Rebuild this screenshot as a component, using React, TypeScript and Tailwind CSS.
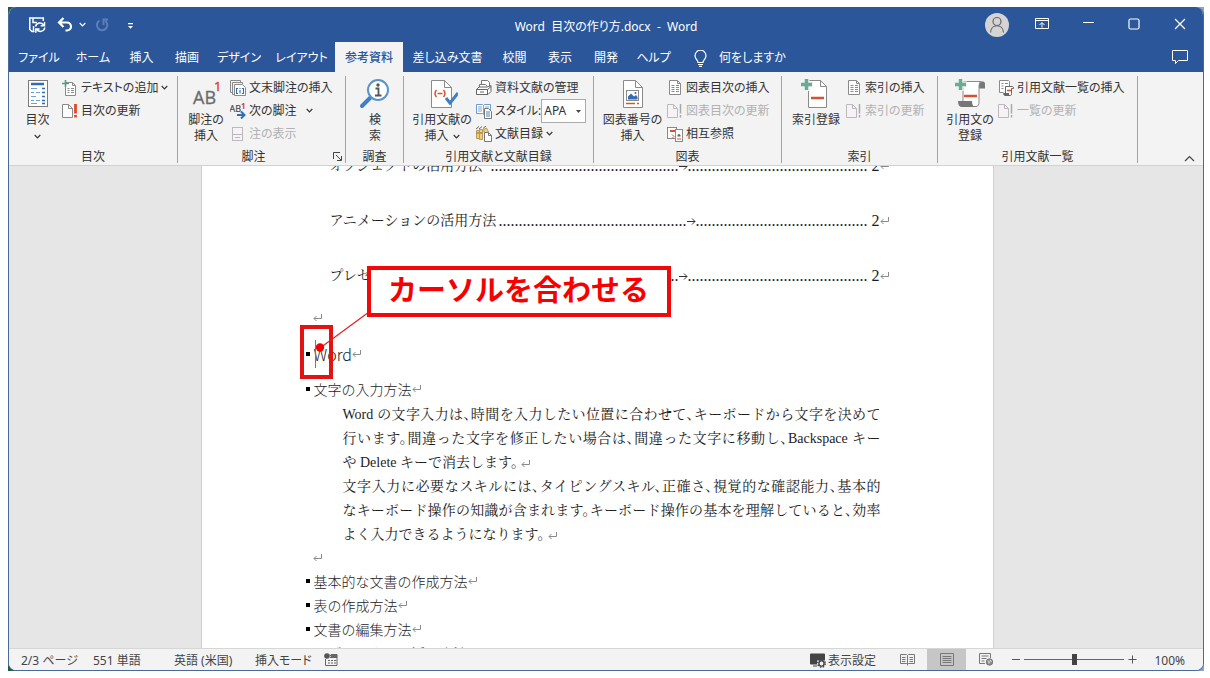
import type { ReactNode } from "react";

function Chevron({ color = "#333" }: { color?: string }) {
  return (
    <svg width="7" height="5" viewBox="0 0 7 5" fill="none" stroke={color} strokeWidth="1.2" aria-hidden="true">
      <path d="M.7 1 3.5 3.8 6.3 1" />
    </svg>
  );
}

/* ---------- large ribbon icons ---------- */

function L({ children }: { children: ReactNode }) {
  return (
    <svg width="32" height="32" viewBox="0 0 32 32" fill="none" className="shrink-0" aria-hidden="true">
      {children}
    </svg>
  );
}

const TocIcon = () => (
  <L>
    <rect x="6.5" y="2.5" width="19" height="26" fill="#fff" stroke="#7b7b7b" />
    <path d="M9 6h13" stroke="#2f6db5" strokeWidth="2.4" />
    <path d="M9 10.500h6M9 14.5h3M14 14.5h4M9 18.5h5M9 22.5h3M14 22.5h4M9 25.5h6" stroke="#6fa0d4" />
    <path d="M20 10.500h3M20 14.5h3M20 18.5h3M20 22.5h3M20 25.500h3" stroke="#2f6db5" strokeWidth="1.300" />
  </L>
);

const FootnoteIcon = () => (
  <L>
    <text x="3" y="26" fontSize="18" fill="#6b6b6b" stroke="#6b6b6b" strokeWidth=".3" fontFamily="Open Sans, sans-serif">
      AB
    </text>
    <text x="24" y="13" fontSize="13" fill="#d9442c" stroke="#d9442c" strokeWidth=".4" fontFamily="Open Sans, sans-serif">
      1
    </text>
  </L>
);

const SearchInfoIcon = () => (
  <L>
    <path d="M12 19 3 28" stroke="#3f7fc4" strokeWidth="4" strokeLinecap="round" />
    <circle cx="19" cy="12" r="10" fill="#fff" stroke="#5b93cf" strokeWidth="2" />
    <circle cx="19" cy="7" r="1.7" fill="#555" />
    <path d="M16.5 10.5h3V17M16 17.5h6.500" stroke="#555" strokeWidth="1.8" />
  </L>
);

const CitationIcon = () => (
  <L>
    <path d="M5.5 2.500h13l7 7v20h-20z" fill="#fff" stroke="#8a8a8a" />
    <path d="M18.5 2.500v7h7" stroke="#8a8a8a" />
    <path d="M10.500 12q-3 3.500 0 7M17.500 12q3 3.500 0 7M11.500 15.500h5" stroke="#d9532c" strokeWidth="1.5" />
    <path d="m20 20 4 5 8-10" stroke="#3f7fc4" strokeWidth="3" />
  </L>
);

const CaptionIcon = () => (
  <L>
    <path d="M6.5 2.500h12l7 7v20h-19z" fill="#fff" stroke="#8a8a8a" />
    <path d="M18.5 2.500v7h7" stroke="#8a8a8a" />
    <rect x="9.5" y="12.500" width="12" height="10" fill="#fff" stroke="#8a8a8a" />
    <path d="M11 21.500v-3l3-3 3 3 2-1.500 1.500 2v2.500z" fill="#2f6db5" />
    <circle cx="18.5" cy="15" r="1" fill="#2f6db5" />
    <path d="M9 25.500h9M20 25.500h2" stroke="#d9532c" strokeWidth="1.5" />
  </L>
);

const MarkEntryIcon = () => (
  <L>
    <path d="M8.500 2.500h12l6 6v21h-18z" fill="#fff" stroke="#8a8a8a" />
    <path d="M20.500 2.500v6h6" stroke="#8a8a8a" />
    <path d="M6.500 0v13M0 6.500h13" stroke="#f3f3f3" strokeWidth="6" />
    <path d="M6.500 1v11M1 6.500h11" stroke="#6aab93" strokeWidth="3.5" />
    <path d="M11 20h13" stroke="#d35230" strokeWidth="2.5" />
  </L>
);

const MarkCitationIcon = () => (
  <L>
    <path d="M24 3.500h5q2 0 2 3v4h-6z" fill="#777" />
    <path d="M9 3.500h18q-2 1-2 4v16q0 5-3 5H9z" fill="#fff" stroke="#8a8a8a" />
    <path d="M4 23h14q0 6 4 6H8q-4 0-4-6z" fill="#777" />
    <path d="M6.500 0v13M0 6.500h13" stroke="#f3f3f3" strokeWidth="6" />
    <path d="M6.500 1v11M1 6.500h11" stroke="#6aab93" strokeWidth="3.5" />
    <path d="M10 18h13" stroke="#d35230" strokeWidth="2.5" />
  </L>
);

/* ---------- small ribbon icons ---------- */

function S({ children }: { children: ReactNode }) {
  return (
    <svg width="16" height="16" viewBox="0 0 16 16" fill="none" className="shrink-0" aria-hidden="true">
      {children}
    </svg>
  );
}

const AddTextIcon = () => (
  <S>
    <path d="M3.500 2.500h7l3 3v10h-10z" fill="#fff" stroke="#8a8a8a" />
    <path d="M10.500 2.500v3h3M5.500 8.500h2M9 8.500h3M5.500 10.500h2M9 10.500h3M5.500 12.500h2M9 12.500h3" stroke="#8a8a8a" />
    <path d="M3.500 0v7M0 3.500h7" stroke="#4f9e80" strokeWidth="1.6" />
  </S>
);

const UpdateIcon = ({ off = false }: { off?: boolean }) => (
  <S>
    <path d="M.5 1.500h6l4 4v9H.5z" fill={off ? "#f6f3f6" : "#fff"} stroke={off ? "#bdb8bd" : "#8a8a8a"} />
    <path d="M6.500 1.500v4h4" stroke={off ? "#bdb8bd" : "#8a8a8a"} />
    <path d="M13.500 1v9.500M13.500 12v2.500" stroke={off ? "#a9a9a9" : "#e0492a"} strokeWidth={off ? "1.5" : "2.8"} />
  </S>
);

const EndnoteIcon = () => (
  <S>
    <path d="M2.500 12.500h-2v-12h10v2M4.500 14.500h-2v-12h10v2" stroke="#8a8a8a" />
    <path d="M4.500 4.500h8l3 3v8h-11z" fill="#fff" stroke="#8a8a8a" />
    <path d="M8 8.500H6.500v5H8M12 8.500h1.500v5H12M10 8v1M10 10v3.500" stroke="#2f6db5" strokeWidth="1.1" />
  </S>
);

const NextNoteIcon = () => (
  <S>
    <text x="-.5" y="9" fontSize="9" fill="#444" stroke="#444" strokeWidth=".2" fontFamily="Open Sans, sans-serif">
      AB
    </text>
    <text x="11" y="6" fontSize="8" fontWeight="700" fill="#d9442c" fontFamily="Open Sans, sans-serif">
      1
    </text>
    <path d="M7 12h7M11 8.500l3.500 3.500-3.500 3.500" stroke="#2f6db5" strokeWidth="2" />
  </S>
);

const ShowNotesIcon = () => (
  <S>
    <rect x="2.500" y="1.500" width="10" height="13" fill="#f6f3f6" stroke="#bdb8bd" />
    <path d="M2.500 8.500h10M5 11.500h5" stroke="#bdb8bd" />
  </S>
);

const SourcesIcon = () => (
  <S>
    <path d="M5.500 5V.5h6l2 2V8" fill="#fff" stroke="#777" />
    <path d="M3.500 8V4.500h6l2 2" stroke="#777" fill="#fff" />
    <path d="M.5 9.500 3 7h8l4-1.500v6L12 14.500H.5z" fill="#fff" stroke="#666" />
    <path d="M.5 9.500h11v5M11.500 9.500l3.500-3M4 12h4" stroke="#666" />
  </S>
);

const StyleIcon = () => (
  <S>
    <path d="M.5 1.500h6l1 1 1-1h6v9h-6l-1 1-1-1h-6z" fill="#fff" stroke="#6d9bce" />
    <path d="M7.500 2v9M2 4h4M2 6h4M2 8h4M9 4h4" stroke="#7ea6d0" />
    <path d="M8.500 5.500h4l3 3v7h-7z" fill="#fff" stroke="#777" />
    <path d="M10 9h4M10 11h4M10 13h4" stroke="#4b83bf" />
  </S>
);

const BibliographyIcon = () => (
  <S>
    <path d="M.5 4.500h3v8h-3zM3.500 3.500h3v10h-3z" fill="#f2cf7a" stroke="#b79a5a" />
    <path d="m7.500 3.500 3-1.500 2 4-4 2z" fill="#f2cf7a" stroke="#b79a5a" />
    <path d="M0 3 3 .5M3 3l3-2.500M7 2.500 10 0M1 7h2M4 7h2" stroke="#666" />
    <path d="M8.500 6.500h4l3 3v6h-7z" fill="#fff" stroke="#777" />
    <path d="M12.500 6.500v3h3" stroke="#777" />
  </S>
);

const PageLinesIcon = () => (
  <S>
    <path d="M2.500.5h8l3 3v11h-11z" fill="#fff" stroke="#8a8a8a" />
    <path d="M10.500.5v3h3M4.500 5.500h3M9 5.500h3M4.500 7.500h3M9 7.500h3M4.500 9.500h3M9 9.500h3M4.500 11.500h3M9 11.500h3" stroke="#8a8a8a" />
  </S>
);

const CrossRefIcon = () => (
  <S>
    <rect x=".5" y="1.500" width="9" height="11" fill="#fff" stroke="#8a8a8a" />
    <path d="M3 5h5" stroke="#d9532c" strokeWidth="2" />
    <rect x="8.500" y="3.500" width="7" height="12" fill="#fff" stroke="#8a8a8a" />
    <path d="M10.500 9.500a1.500 1.500 0 1 1 3 0v1h-3z" fill="#666" />
    <path d="M10 13h4M5 8.500l2 2-2 2" stroke="#d9532c" />
  </S>
);

const AuthoritiesIcon = () => (
  <S>
    <path d="M5.500 12.500h-4V.5h9l1 1V6" fill="#fff" stroke="#8a8a8a" />
    <path d="M3.500 3.500h2M7 3.500h3M3.500 6h2M3.500 8.500h2" stroke="#8a8a8a" />
    <path d="M7.500 6.500h7q1 0 1 2h-2v5q0 2-1 2h-6q-1-1-1-2h2z" fill="#fff" stroke="#666" />
    <path d="M9 10.500h4" stroke="#d35230" strokeWidth="1.5" />
    <path d="M6 14h5" stroke="#666" strokeWidth="2" />
  </S>
);

/* ---------- ribbon building blocks ---------- */

function Group({ label, width, children, launcher = false }: { label: string; width: string; children: ReactNode; launcher?: boolean }) {
  return (
    <section aria-label={label} className={`relative flex h-[87px] shrink-0 flex-col border-r border-[#a3a3a3] ${width}`}>
      <div className="flex h-[73px] pl-1">{children}</div>
      <div className={`h-[14px] text-center leading-4 ${launcher ? "pr-4" : ""}`}>{label}</div>
      {launcher && (
        <button type="button" aria-label="脚注と文末脚注の設定" className="absolute right-[3px] bottom-0.5">
          <svg width="9" height="9" viewBox="0 0 9 9" fill="none" stroke="#444">
            <path d="M.5 7V.5H7M3 3l5 5M8.500 4v4.500H4" />
          </svg>
        </button>
      )}
    </section>
  );
}

function Big({ icon, lines, width, menu = false }: { icon: ReactNode; lines: string[]; width: string; menu?: boolean }) {
  return (
    <button type="button" className={`flex shrink-0 flex-col items-center pt-0.5 ${width}`}>
      {icon}
      <span className="mt-0.5 flex flex-col items-center leading-4 whitespace-nowrap">
        {lines.map((line, i) => (
          <span key={line} className="flex items-center gap-1">
            {line}
            {menu && lines.length > 1 && i === lines.length - 1 && <Chevron />}
          </span>
        ))}
        {menu && lines.length === 1 && (
          <span className="flex h-4 items-center">
            <Chevron />
          </span>
        )}
      </span>
    </button>
  );
}

function Small({ icon, label, menu = false, off = false, wide = false }: { icon: ReactNode; label: string; menu?: boolean; off?: boolean; wide?: boolean }) {
  return (
    <button
      type="button"
      disabled={off}
      className={`flex h-[23px] items-center gap-[3px] whitespace-nowrap ${off ? "text-[#b1b1b1]" : "text-[#333]"}`}
    >
      {icon}
      <span>{label}</span>
      {menu && (
        <span className={wide ? "ml-1.5" : ""}>
          <Chevron />
        </span>
      )}
    </button>
  );
}

const tabs = [
  { label: "ファイル", width: "w-[56px]" },
  { label: "ホーム", width: "w-[52px]" },
  { label: "挿入", width: "w-[45px]" },
  { label: "描画", width: "w-[46px]" },
  { label: "デザイン", width: "w-[58px]" },
  { label: "レイアウト", width: "w-[67px]" },
  { label: "参考資料", width: "w-[68px]", active: true },
  { label: "差し込み文書", width: "w-[89px]" },
  { label: "校閲", width: "w-[45px]" },
  { label: "表示", width: "w-[46px]" },
  { label: "開発", width: "w-[46px]" },
  { label: "ヘルプ", width: "w-[49px]" },
];

function TitleBar() {
  return (
    <header className="grid h-[35px] grid-cols-[1fr_auto_1fr] items-center text-white">
      <div className="flex items-center pl-[19px]">
        <button type="button" aria-label="上書き保存" className="mr-[11px]">
          <svg width="18" height="18" viewBox="0 0 18 18" fill="none" stroke="#fff" strokeWidth="1.5">
            <path d="M6.500 15.500H4L1.800 13.500V2h13.500v3M5 2v4.500h4M5.500 15v-5" />
            <path d="M7.500 10.500a4.500 4.500 0 0 1 8.300-1.200M16.800 11.500a4.500 4.500 0 0 1-8.300 1.700M16.500 6v3.800h-3.800M7.800 16.800V13h3.800" />
          </svg>
        </button>
        <button type="button" aria-label="元に戻す" className="mr-1.5 flex items-center gap-1.5">
          <svg width="16" height="16" viewBox="0 0 16 16" fill="none" stroke="#fff" strokeWidth="2.2">
            <path d="M6.500 1 2 5.500 6.500 10M2.500 5.500H10a4 4 0 0 1 0 8H8.500" />
          </svg>
          <Chevron color="#fff" />
        </button>
        <button type="button" aria-label="やり直し" className="ml-0.5">
          <svg width="16" height="16" viewBox="0 0 16 16" fill="none" stroke="#5b7fbb" strokeWidth="2">
            <path d="M5.500 3.500a5.200 5.200 0 1 0 6 .5M14 2.500H9.500V8" />
          </svg>
        </button>
        <button type="button" aria-label="クイックアクセスツールバーの設定" className="ml-[17px] pt-0.5">
          <svg width="7" height="8" viewBox="0 0 7 8" fill="#fff">
            <path d="M1 1h5v1.200H1zM1 4h5L3.500 6.800z" />
          </svg>
        </button>
      </div>
      <h1 className="pt-1 whitespace-pre">Word  目次の作り方.docx  -  Word</h1>
      <div className="flex items-center justify-end">
        <button type="button" aria-label="アカウント" className="mr-[10px]">
          <svg width="24" height="24" viewBox="0 0 24 24" fill="none" stroke="#666" strokeWidth="1.2">
            <circle cx="12" cy="12" r="12" fill="#d4d4d4" stroke="none" />
            <circle cx="12" cy="8.500" r="4" />
            <path d="M5.500 19.500c.5-9 12.500-9 13 0" />
          </svg>
        </button>
        <button type="button" aria-label="リボンの表示オプション" className="flex w-[46px] justify-center pb-0.5">
          <svg width="14" height="12" viewBox="0 0 14 12" fill="none" stroke="#fff">
            <path d="M.5.5h13v10H.5zM.5 2.500h13M7 9.500V5M4.500 7 7 4.500 9.500 7" />
          </svg>
        </button>
        <button type="button" aria-label="最小化" className="flex w-[46px] justify-center pb-1">
          <svg width="11" height="3" viewBox="0 0 11 3" stroke="#fff">
            <path d="M0 1.500h11" />
          </svg>
        </button>
        <button type="button" aria-label="最大化" className="flex w-[46px] justify-center pb-0.5">
          <svg width="12" height="12" viewBox="0 0 12 12" fill="none" stroke="#fff" strokeWidth="1.2">
            <rect x="1" y="1" width="10" height="10" rx="1.5" />
          </svg>
        </button>
        <button type="button" aria-label="閉じる" className="flex w-[46px] justify-center pb-0.5">
          <svg width="12" height="12" viewBox="0 0 12 12" stroke="#fff" strokeWidth="1.2">
            <path d="m1 1 10 10M11 1 1 11" />
          </svg>
        </button>
      </div>
    </header>
  );
}

function Tabs() {
  return (
    <nav aria-label="リボン" className="flex h-[30px] items-stretch pl-0.5 text-white">
      {tabs.map((t) => (
        <button
          key={t.label}
          type="button"
          className={`flex shrink-0 items-center justify-center pt-0.5 whitespace-nowrap ${t.width} ${t.active ? "bg-[#f3f3f3] font-medium text-[#2b579a]" : ""}`}
        >
          {t.label}
        </button>
      ))}
      <button type="button" className="ml-4 flex items-center gap-3 pt-0.5 whitespace-nowrap">
        <svg width="13" height="17" viewBox="0 0 13 17" fill="none" stroke="#fff" strokeWidth="1.2">
          <path d="M4 12.500c0-2.500-3-3.500-3-6.800a5.300 5.300 0 0 1 11 0c0 3.300-3 4.300-3 6.800zM4 14.500h5M5 16.400h3" />
        </svg>
        何をしますか
      </button>
      <button type="button" aria-label="コメント" className="mr-[15px] ml-auto">
        <svg width="16" height="14" viewBox="0 0 16 14" fill="none" stroke="#fff">
          <path d="M.5.5h15v10H6.500l-3 3v-3h-3z" />
        </svg>
      </button>
    </nav>
  );
}

function Ribbon() {
  return (
    <div className="flex h-[94px] shrink-0 overflow-hidden border-b border-[#d2d2d2] bg-[#f3f3f3] pt-1 text-[#333]">
      <Group label="目次" width="w-[169px]">
        <Big icon={<TocIcon />} lines={["目次"]} width="w-[49px]" menu />
        <div>
          <Small icon={<AddTextIcon />} label="テキストの追加" menu />
          <Small icon={<UpdateIcon />} label="目次の更新" />
        </div>
      </Group>
      <Group label="脚注" width="w-[168px]" launcher>
        <Big icon={<FootnoteIcon />} lines={["脚注の", "挿入"]} width="w-[48px]" />
        <div>
          <Small icon={<EndnoteIcon />} label="文末脚注の挿入" />
          <Small icon={<NextNoteIcon />} label="次の脚注" menu wide />
          <Small icon={<ShowNotesIcon />} label="注の表示" off />
        </div>
      </Group>
      <Group label="調査" width="w-[58px]">
        <Big icon={<SearchInfoIcon />} lines={["検", "索"]} width="w-[50px]" />
      </Group>
      <Group label="引用文献と文献目録" width="w-[190px]">
        <Big icon={<CitationIcon />} lines={["引用文献の", "挿入"]} width="w-[68px]" menu />
        <div>
          <Small icon={<SourcesIcon />} label="資料文献の管理" />
          <div className="flex h-[23px] items-center">
            <StyleIcon />
            <label htmlFor="citation-style" className="ml-[3px] whitespace-nowrap">
              スタイル:
            </label>
            <span className="relative flex">
              <select
                id="citation-style"
                defaultValue="APA"
                className="h-6 w-[45px] appearance-none border border-[#ababab] bg-white pl-0.5 text-[#333]"
              >
                <option>APA</option>
                <option>MLA</option>
              </select>
              <svg width="5" height="3" viewBox="0 0 5 3" className="pointer-events-none absolute top-[11px] right-[5px]" fill="#444">
                <path d="M0 0h5L2.500 3z" />
              </svg>
            </span>
          </div>
          <Small icon={<BibliographyIcon />} label="文献目録" menu />
        </div>
      </Group>
      <Group label="図表" width="w-[188px]">
        <Big icon={<CaptionIcon />} lines={["図表番号の", "挿入"]} width="w-[69px]" />
        <div>
          <Small icon={<PageLinesIcon />} label="図表目次の挿入" />
          <Small icon={<UpdateIcon off />} label="図表目次の更新" off />
          <Small icon={<CrossRefIcon />} label="相互参照" />
        </div>
      </Group>
      <Group label="索引" width="w-[156px]">
        <Big icon={<MarkEntryIcon />} lines={["索引登録"]} width="w-[60px]" />
        <div>
          <Small icon={<PageLinesIcon />} label="索引の挿入" />
          <Small icon={<UpdateIcon off />} label="索引の更新" off />
        </div>
      </Group>
      <Group label="引用文献一覧" width="w-[200px]">
        <Big icon={<MarkCitationIcon />} lines={["引用文の", "登録"]} width="w-[56px]" />
        <div>
          <Small icon={<AuthoritiesIcon />} label="引用文献一覧の挿入" />
          <Small icon={<UpdateIcon off />} label="一覧の更新" off />
        </div>
      </Group>
      <button type="button" aria-label="リボンを折りたたむ" className="mr-2 mb-[3px] ml-auto self-end">
        <svg width="11" height="7" viewBox="0 0 11 7" fill="none" stroke="#444" strokeWidth="1.2">
          <path d="M1 6l4.500-4.500L10 6" />
        </svg>
      </button>
    </div>
  );
}

/* ---------- document ---------- */

function Return() {
  return (
    <svg width="9" height="8" viewBox="0 0 9 8" fill="none" stroke="#8a8a8a" className="inline-block shrink-0" aria-hidden="true">
      <path d="M8.500 0v4.500H1M3.500 2 1 4.500 3.500 7" />
    </svg>
  );
}

function TocLine({ title, before, after }: { title: string; before: number; after: number }) {
  return (
    <div className="mr-[104px] ml-[128px] flex h-[55px] items-center leading-6 whitespace-nowrap">
      <span>{title}</span>
      <span aria-hidden="true" className="ml-auto text-base leading-6">
        {".".repeat(before)}
      </span>
      <svg width="9" height="9" viewBox="0 0 9 9" fill="none" stroke="#333" className="shrink-0">
        <path d="M0 5.500h8M5 2.500l3 3-3 3" />
      </svg>
      <span aria-hidden="true" className="text-base leading-6">
        {".".repeat(after)}
      </span>
      <span className="ml-1 text-base leading-6">2</span>
      <Return />
    </div>
  );
}

function Heading({ text, height, large = false }: { text: string; height: string; large?: boolean }) {
  return (
    <div className={`ml-[104px] flex items-center font-['Noto_Sans_CJK_JP',sans-serif] font-light whitespace-nowrap ${height}`}>
      <span className="mr-1 size-1 bg-black" />
      <h2 className={large ? "text-base" : ""}>{text}</h2>
      <Return />
    </div>
  );
}

const justified = "block [text-align-last:justify]";

function Document() {
  return (
    <main className="min-h-0 flex-1 overflow-hidden bg-[#e6e6e6] pr-[18px]">
      <article className="relative mx-auto h-full w-[793px] overflow-hidden border-x border-[#d0d0d0] bg-white font-['Liberation_Serif','Noto_Serif_CJK_JP','Noto_Sans_CJK_JP',serif] text-[14px] text-[#1c1c1c] [font-feature-settings:normal]">
        <div className="-mt-7">
          <TocLine title="オブジェクトの活用方法" before={47} after={45} />
          <TocLine title="アニメーションの活用方法" before={47} after={43} />
          <TocLine title="プレゼンテーション" before={54} after={45} />
          <div className="ml-[111px] flex h-[30px] items-center">
            <Return />
          </div>
          <Heading text="Word" height="h-[42px]" large />
          <Heading text="文字の入力方法" height="h-7" />
          <div className="ml-[141px] w-[538px] leading-6 whitespace-nowrap [font-feature-settings:'halt']">
            <p>
              <span className={justified}>Word の文字入力は、時間を入力したい位置に合わせて、キーボードから文字を決めて</span>
              <span className={justified}>行います。間違った文字を修正したい場合は、間違った文字に移動し、Backspace キー</span>
              <span className="block">
                や Delete キーで消去します。 <Return />
              </span>
            </p>
            <p>
              <span className={justified}>文字入力に必要なスキルには、タイピングスキル、正確さ、視覚的な確認能力、基本的</span>
              <span className={justified}>なキーボード操作の知識が含まれます。キーボード操作の基本を理解していると、効率</span>
              <span className="block">
                よく入力できるようになります。 <Return />
              </span>
            </p>
          </div>
          <div className="ml-[111px] flex h-[22px] items-center">
            <Return />
          </div>
          <Heading text="基本的な文書の作成方法" height="h-6" />
          <Heading text="表の作成方法" height="h-6" />
          <Heading text="文書の編集方法" height="h-6" />
          <Heading text="オブジェクトの活用方法" height="h-6" />
        </div>

        <div className="absolute top-[174px] left-[113px] h-7 w-px bg-[#777]" />
        <div className="absolute top-[159px] left-[98px] h-[54px] w-[33px] border-4 border-[#e31313]" />
        <svg width="60" height="46" viewBox="0 0 60 46" className="absolute top-[142px] left-[112px]" fill="none">
          <path d="M55 4 6 40" stroke="#e02020" strokeWidth="1.2" />
          <circle cx="6" cy="39.500" r="4.2" fill="#f00000" />
        </svg>
        <div className="absolute top-[100px] left-[165px] flex h-[51px] w-[304px] justify-center border-4 border-[#f20808] bg-white font-['Noto_Sans_CJK_JP',sans-serif] text-[29px] leading-9 font-bold whitespace-nowrap text-[#f80000]">
          カーソルを合わせる
        </div>
      </article>
    </main>
  );
}

function StatusBar() {
  return (
    <footer className="flex h-[22px] shrink-0 items-center border-t border-[#d6d6d6] bg-[#f3f3f3] pr-[18px] pl-3 whitespace-nowrap text-[#444]">
      <button type="button" className="w-[72px] pt-0.5 text-left">2/3 ページ</button>
      <button type="button" className="w-[81px] pt-0.5 text-left">551 単語</button>
      <button type="button" className="w-[81px] pt-0.5 text-left">英語 (米国)</button>
      <button type="button" className="w-[69px] pt-0.5 text-left">挿入モード</button>
      <button type="button" aria-label="マクロの記録">
        <svg width="14" height="13" viewBox="0 0 14 13" fill="none" stroke="#666">
          <path d="M6 2.500h7v10H1.500V6M6 4.500h7" />
          <path d="M4 7.500h2M7 7.500h2M10 7.500h2M4 10h2M7 10h2M10 10h2" />
          <path d="M7 1.500h6v2H7z" fill="#666" />
          <circle cx="3" cy="3" r="2.8" fill="#555" stroke="none" />
        </svg>
      </button>
      <button type="button" className="ml-auto flex items-center gap-0.5 pt-0.5">
        <svg width="16" height="15" viewBox="0 0 16 15" fill="#444">
          <path d="M1 .5h13q1 0 1 1v6H7v4H1q-1 0-1-1v-9q0-1 1-1zM3 12.500h4v1H3z" />
          <circle cx="11.500" cy="10.500" r="2.600" fill="none" stroke="#444" strokeWidth="1.4" />
          <circle cx="11.500" cy="10.500" r="3.800" fill="none" stroke="#444" strokeWidth="1.4" strokeDasharray="1.5 1.5" />
        </svg>
        表示設定
      </button>
      <button type="button" aria-label="閲覧モード" className="ml-3 flex h-[21px] w-[39px] items-center justify-center">
        <svg width="15" height="13" viewBox="0 0 15 13" fill="none" stroke="#777">
          <path d="M.5 1.500h6l1 1 1-1h6v9h-6l-1 1-1-1h-6zM7.500 2.500v10M2 4.500h3.500M2 6.500h3.500M2 8.500h3.500M9.500 4.500H13M9.500 6.500H13M9.500 8.500H13" />
        </svg>
      </button>
      <button type="button" aria-label="印刷レイアウト" aria-pressed="true" className="flex h-[21px] w-[39px] items-center justify-center bg-[#c6c6c6]">
        <svg width="14" height="13" viewBox="0 0 14 13" fill="none" stroke="#777">
          <path d="M.5.500h13v12H.5zM2.500 3.500h9M2.500 5.500h9M2.500 7.500h9M2.500 9.500h9" />
        </svg>
      </button>
      <button type="button" aria-label="Web レイアウト" className="flex h-[21px] w-[41px] items-center justify-center">
        <svg width="15" height="13" viewBox="0 0 15 13" fill="none" stroke="#777">
          <path d="M6 10.500H.5V.5h11V5M2.500 3h7M2.500 5.500h5M2.500 8h3" />
          <circle cx="10.500" cy="9" r="3.200" fill="#8a8a8a" />
          <path d="M9 7.500q1.500 1 1 3M11 7l1.500 2" stroke="#f3f3f3" />
        </svg>
      </button>
      <button type="button" aria-label="縮小" className="ml-1">
        <svg width="9" height="9" viewBox="0 0 9 9" stroke="#555">
          <path d="M1 4.500h8" />
        </svg>
      </button>
      <input
        type="range"
        aria-label="ズーム"
        min={10}
        max={190}
        defaultValue={100}
        className="mx-1 h-[11px] w-[100px] appearance-none bg-transparent [&::-webkit-slider-runnable-track]:h-px [&::-webkit-slider-runnable-track]:bg-[#666] [&::-webkit-slider-thumb]:-mt-[5px] [&::-webkit-slider-thumb]:h-[11px] [&::-webkit-slider-thumb]:w-[5px] [&::-webkit-slider-thumb]:appearance-none [&::-webkit-slider-thumb]:bg-[#444]"
      />
      <button type="button" aria-label="拡大">
        <svg width="9" height="9" viewBox="0 0 9 9" stroke="#555">
          <path d="M.5 4.500h8M4.500.5v8" />
        </svg>
      </button>
      <button type="button" className="w-[48px] pt-0.5 text-right">100%</button>
    </footer>
  );
}

export default function App() {
  return (
    <div className="h-screen bg-white pt-[7px] pr-1.5 pb-[7px] pl-2">
      <div className="h-full bg-linear-to-r from-[#1f5c45] to-[#8fa3c8]">
        <div className="flex h-full flex-col overflow-hidden rounded-lg border border-t-0 border-[#4a699b] bg-white font-['Noto_Sans','Noto_Sans_CJK_JP',sans-serif] text-xs leading-4 [font-feature-settings:'palt']">
          <div className="shrink-0 bg-[#2b579a]">
            <TitleBar />
            <Tabs />
          </div>
          <Ribbon />
          <Document />
          <StatusBar />
        </div>
      </div>
    </div>
  );
}
